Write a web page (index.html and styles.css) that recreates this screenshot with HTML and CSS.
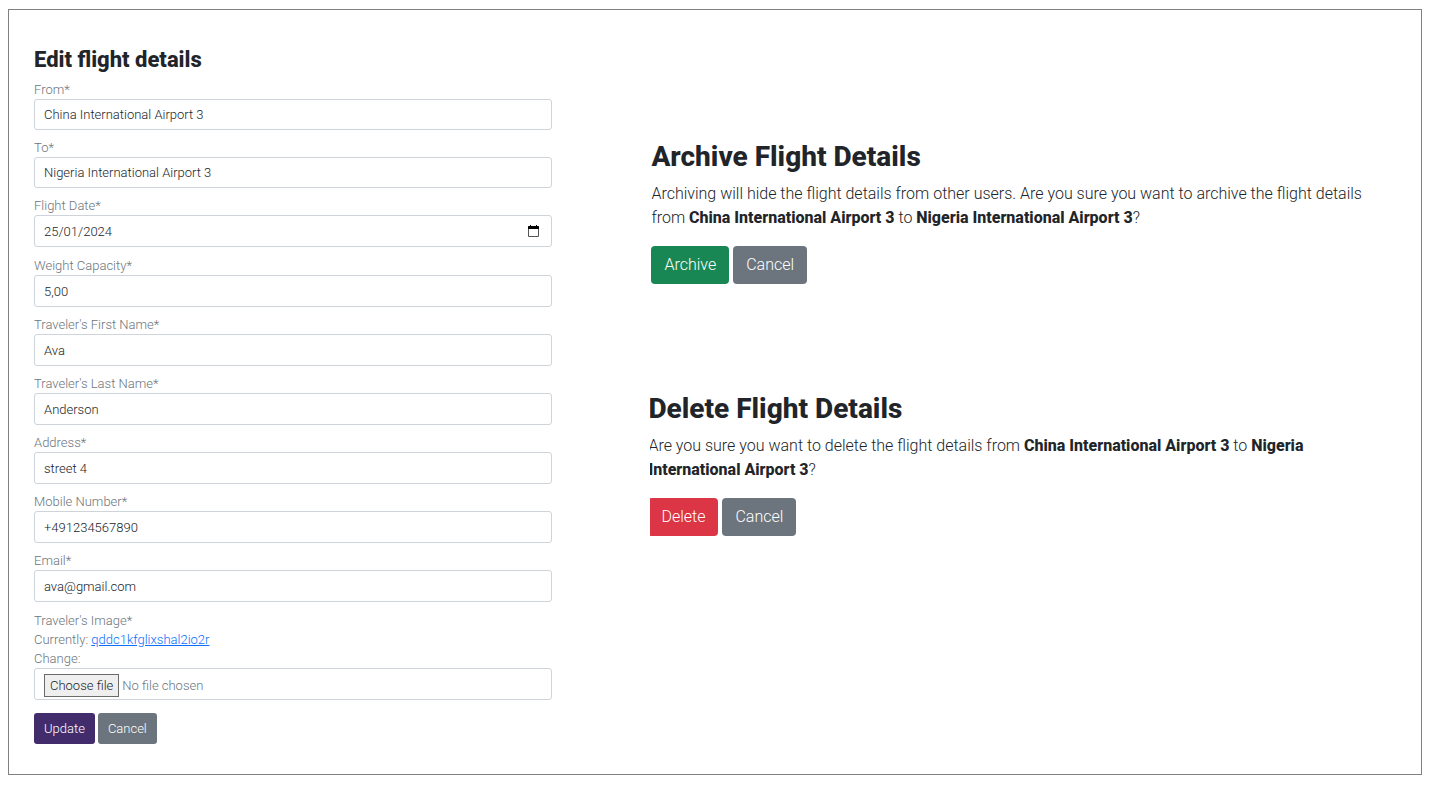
FILE: index.html
```html
<!DOCTYPE html>
<html lang="en">
<head>
<meta charset="utf-8">
<title>Flight details</title>
<link rel="stylesheet" href="styles.css">
</head>
<body>
<main class="panel">
  <form class="edit">
    <h2 class="edit-title">Edit flight details</h2>
    <div class="group">
      <div class="field">
        <label class="label" for="from">From*</label>
        <input class="control control-short" id="from" type="text" value="China International Airport 3">
      </div>
      <div class="field">
        <label class="label" for="to">To*</label>
        <input class="control control-short" id="to" type="text" value="Nigeria International Airport 3">
      </div>
      <div class="field">
        <label class="label" for="date">Flight Date*</label>
        <div class="control date">
          <input class="date-input" id="date" type="text" value="25/01/2024">
          <button class="date-button" type="button" aria-label="Open calendar">
            <svg class="date-icon" viewBox="0 0 11 12" aria-hidden="true">
              <path d="M2 0h1v1h5V0h1v1h1q1 0 1 1v9q0 1-1 1H1q-1 0-1-1V2q0-1 1-1h1z" fill="#555"/>
              <path d="M2 0h1v1h5V0h1v1h1q1 0 1 1v2H0V2q0-1 1-1h1z" fill="#000"/>
              <path d="M1 4h9v7H1z" fill="#fff"/>
            </svg>
          </button>
        </div>
      </div>
    </div>
    <div class="group">
      <div class="field">
        <label class="label" for="weight">Weight Capacity*</label>
        <input class="control" id="weight" type="text" value="5,00">
      </div>
      <div class="field">
        <label class="label" for="first">Traveler's First Name*</label>
        <input class="control" id="first" type="text" value="Ava">
      </div>
      <div class="field">
        <label class="label" for="last">Traveler's Last Name*</label>
        <input class="control" id="last" type="text" value="Anderson">
      </div>
      <div class="field">
        <label class="label" for="address">Address*</label>
        <input class="control" id="address" type="text" value="street 4">
      </div>
      <div class="field">
        <label class="label" for="mobile">Mobile Number*</label>
        <input class="control" id="mobile" type="tel" value="+491234567890">
      </div>
      <div class="field">
        <label class="label" for="email">Email*</label>
        <input class="control" id="email" type="email" value="ava@gmail.com">
      </div>
    </div>
    <div class="group">
      <div class="field">
        <label class="label" for="image">Traveler's Image*</label>
        <div class="label">Currently: <a class="link" href="#image">qddc1kfglixshal2io2r</a></div>
        <div class="label">Change:</div>
        <div class="control file">
          <input class="file-input" id="image" type="file">
          <span class="file-button">Choose file</span>
          <span class="file-name">No file chosen</span>
        </div>
      </div>
    </div>
    <div class="actions actions-small">
      <button class="btn btn-small btn-update" type="submit">Update</button>
      <button class="btn btn-small btn-cancel" type="button">Cancel</button>
    </div>
  </form>
  <div class="dialogs">
    <section class="dialog">
      <h1 class="dialog-title">Archive Flight Details</h1>
      <p class="dialog-text">Archiving will hide the flight details from other users. Are you sure you want to archive the flight details from <strong>China International Airport 3</strong> to <strong>Nigeria International Airport 3</strong>?</p>
      <div class="actions">
        <button class="btn btn-archive" type="button">Archive</button>
        <button class="btn btn-cancel" type="button">Cancel</button>
      </div>
    </section>
    <div class="dialog-clip">
      <section class="dialog dialog-delete">
        <h1 class="dialog-title">Delete Flight Details</h1>
        <p class="dialog-text">Are you sure you want to delete the flight details from <strong>China International Airport 3</strong> to <strong>Nigeria International Airport 3</strong>?</p>
        <div class="actions">
          <button class="btn btn-delete" type="button">Delete</button>
          <button class="btn btn-cancel" type="button">Cancel</button>
        </div>
      </section>
    </div>
  </div>
</main>
</body>
</html>
```
FILE: styles.css
```css
* {
  box-sizing: border-box;
}

body {
  margin: 9px 10px 14px 8px;
  background: #fff;
  color: #212529;
  font-family: Roboto, "Open Sans", sans-serif;
  font-size: 16px;
  font-weight: 300;
  line-height: 24px;
}

h1, h2, p {
  margin: 0;
}

strong {
  font-weight: 800;
}

.panel {
  display: grid;
  grid-template-columns: 518fr 734fr;
  column-gap: 99px;
  align-items: start;
  padding: 37px 35px 30px 25px;
  border: 1px solid #808080;
}

/* Edit form */
.edit {
  min-width: 0;
  font-size: 13px;
  line-height: 19px;
}

.edit-title {
  margin-bottom: 7px;
  font-size: 22px;
  font-weight: 800;
  line-height: 26px;
}

.group {
  display: grid;
  row-gap: 8px;
  margin-bottom: 9px;
}

.label {
  display: block;
  color: #6c757d;
}

.control {
  display: block;
  width: 100%;
  height: 32px;
  padding: 0 9px;
  border: 1px solid #ced4da;
  border-radius: 3px;
  background: #fff;
  color: #212529;
  font: inherit;
}

.control-short {
  height: 31px;
}

.date {
  display: flex;
  align-items: center;
  padding-right: 12px;
}

.date-input {
  flex: 1;
  min-width: 0;
  padding: 0;
  border: 0;
  background: none;
  color: inherit;
  font: inherit;
}

.date-button {
  display: flex;
  padding: 0;
  border: 0;
  background: none;
}

.date-icon {
  width: 11px;
  height: 12px;
}

.file {
  position: relative;
  display: flex;
  align-items: center;
  gap: 3px;
  padding-top: 3px;
}

.file-input {
  position: absolute;
  inset: 0;
  width: 100%;
  opacity: 0;
}

.file-button {
  padding: 1px 5px;
  border: 1px solid #6b6b6b;
  background: #efefef;
}

.file-name {
  color: #6c757d;
}

.link {
  color: #0d6efd;
}

/* Buttons */
.actions {
  display: flex;
  gap: 4px;
}

.actions-small {
  gap: 3px;
  padding-top: 4px;
}

.btn {
  padding: 6px 12px;
  border: 1px solid transparent;
  border-radius: 4px;
  color: #fff;
  font: inherit;
}

.btn-small {
  padding: 5px 9px;
  border-radius: 3px;
}

.btn-update {
  background: #432c6c;
}

.btn-cancel {
  background: #6c757d;
}

.btn-archive {
  background: #198754;
}

.btn-delete {
  background: #dc3545;
}

/* Confirmation dialogs */
.dialogs {
  display: grid;
  row-gap: 108px;
  min-width: 0;
  padding-top: 93px;
}

.dialog-title {
  margin-bottom: 8px;
  font-size: 28px;
  font-weight: 800;
  line-height: 34px;
}

.dialog-text {
  margin-bottom: 16px;
}

.dialog-clip {
  margin-left: -1px;
  overflow: hidden;
}

.dialog-delete {
  margin-left: -2px;
}
```
